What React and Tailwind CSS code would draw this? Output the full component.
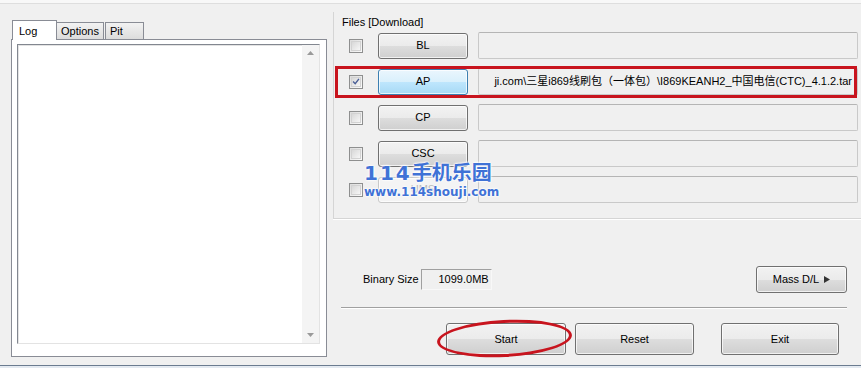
import React from "react";

const font = { fontFamily: '"Liberation Sans", "Noto Sans CJK SC", Arial, sans-serif' };

function Btn({ children, className = "", blue = false, disabled = false }) {
  const base = blue
    ? "border-[#3c7fb1] bg-[linear-gradient(#eaf6fd_0%,#d9f0fc_50%,#bee6fd_51%,#a7d9f5_100%)] text-black"
    : disabled
    ? "border-[#c8c8c8] bg-[#f4f4f4] text-[#b8b8b8]"
    : "border-[#707070] bg-[linear-gradient(#f2f2f2_0%,#ebebeb_50%,#dddddd_51%,#cfcfcf_100%)] text-black";
  return (
    <div
      className={`flex items-center justify-center rounded-[3px] border text-[11px] shadow-[inset_0_0_0_1px_rgba(255,255,255,0.7)] ${base} ${className}`}
    >
      {children}
    </div>
  );
}

function Check({ checked = false, className = "" }) {
  return (
    <div
      className={`flex h-[14px] w-[14px] items-center justify-center border border-[#8e8f8f] bg-[linear-gradient(135deg,#dcdcdc,#fbfbfb)] ${className}`}
    >
      <div className="flex h-[10px] w-[10px] items-center justify-center border border-[#d2d2d2] bg-[linear-gradient(135deg,#d8d8d8,#f6f6f6)]">
        {checked && (
          <svg width="9" height="9" viewBox="0 0 9 9">
            <path d="M1.2 4.6 L3.6 7 L7.8 1.6" fill="none" stroke="#4a5f97" strokeWidth="1.6" />
          </svg>
        )}
      </div>
    </div>
  );
}

function Field({ children }) {
  return (
    <div className="ml-[10px] flex h-[27px] w-[380px] items-center justify-end overflow-hidden whitespace-nowrap rounded-[2px] border border-[#c9c9c9] border-t-[#b5b5b5] bg-[#f0f0f0] pr-[5px] text-[11px] text-black">
      {children}
    </div>
  );
}

function Row({ label, checked, blue, disabled, value }) {
  return (
    <div className="flex h-[27px] items-center">
      <Check checked={checked} />
      <Btn blue={blue} disabled={disabled} className="ml-[15px] h-[26px] w-[90px]">
        {label}
      </Btn>
      <Field>{value}</Field>
    </div>
  );
}

export default function App() {
  return (
    <div style={font} className="relative flex h-[368px] w-[861px] flex-col overflow-hidden bg-[#f0f0f0] text-black">
      <div className="h-[4px] border-b border-[#dedede] bg-[#f8f8f8]" />
      <div className="flex flex-1">
        {/* Left: tabs */}
        <div className="w-[333px] pl-[11px] pt-[16px]">
          <div className="flex h-[19px] items-end pl-[1px]">
            <div className="relative z-10 -mb-[1px] flex h-[20px] w-[45px] items-start border border-b-0 border-[#898c95] bg-white pl-[6px] pt-[2px] text-[11px]">
              Log
            </div>
            <div className="flex h-[17px] w-[47px] items-center border border-l-0 border-b-0 border-[#898c95] bg-[linear-gradient(#f2f2f2,#dcdcdc)] pl-[4px] text-[11px]">
              Options
            </div>
            <div className="ml-[1px] flex h-[17px] w-[39px] items-center border border-b-0 border-[#898c95] bg-[linear-gradient(#f2f2f2,#dcdcdc)] pl-[4px] text-[11px]">
              Pit
            </div>
          </div>
          <div className="h-[318px] w-[316px] border border-[#898c95] bg-white pb-[12px] pl-[5px] pr-[6px] pt-[4px]">
            <div className="flex h-full border border-[#828790] border-b-[#e3e3e3] border-r-[#e3e3e3] bg-white">
              <div className="flex-1 border-l border-t border-[#e3e3e3]" />
              <div className="flex w-[17px] flex-col items-center justify-between bg-[#f4f4f4] py-[6px]">
                <svg width="7" height="4" viewBox="0 0 7 4">
                  <path d="M0 4 L3.5 0 L7 4 Z" fill="#9a9a9a" />
                </svg>
                <svg width="7" height="4" viewBox="0 0 7 4">
                  <path d="M0 0 L3.5 4 L7 0 Z" fill="#9a9a9a" />
                </svg>
              </div>
            </div>
          </div>
        </div>

        {/* Right */}
        <div className="flex flex-1 flex-col">
          <div className="mt-[8px] border-b border-l border-[#d5d5d5] pb-[15px] pl-[15px] pt-[3px] shadow-[0_1px_0_#ffffff]">
            <div className="-ml-[7px] h-[17px] text-[11px] leading-[14px]">Files [Download]</div>
            <div className="flex flex-col gap-[9px]">
              <Row label="BL" />
              <Row
                label="AP"
                checked
                blue
                value="ji.com\三星i869线刷包（一体包）\I869KEANH2_中国电信(CTC)_4.1.2.tar"
              />
              <Row label="CP" />
              <Row label="CSC" />
              <Row label="UMS" disabled />
            </div>
          </div>

          <div className="mt-[47px] flex h-[27px] items-center justify-between pl-[30px] pr-[14px]">
            <div className="flex items-center">
              <span className="text-[11px]">Binary Size</span>
              <div className="ml-[2px] flex h-[21px] w-[71px] items-center justify-end border border-[#a0a0a0] border-b-[#f8f8f8] border-r-[#f8f8f8] pr-[2px] text-[11px]">
                1099.0MB
              </div>
            </div>
            <Btn className="h-[27px] w-[91px]">
              Mass D/L
              <svg className="ml-[5px]" width="6" height="7" viewBox="0 0 6 7">
                <path d="M0 0 L6 3.5 L0 7 Z" fill="#333" />
              </svg>
            </Btn>
          </div>

          <div className="ml-[8px] mr-[14px] mt-[14px] h-[2px] border-b border-t border-[#a0a0a0] border-b-white" />

          <div className="mt-[14px] flex items-center pl-[113px]">
            <Btn className="h-[32px] w-[120px]">Start</Btn>
            <Btn className="ml-[9px] h-[32px] w-[119px]">Reset</Btn>
            <Btn className="ml-[27px] h-[32px] w-[118px]">Exit</Btn>
          </div>
        </div>
      </div>
      <div className="h-[3px] border-t border-[#6b7c90] bg-[#e4eaf1]" />

      {/* Red annotation box around AP row */}
      <div className="pointer-events-none absolute left-[335px] top-[66px] h-[32px] w-[522px] border-[3px] border-[#c8141e]" />
      {/* Red ellipse around Start */}
      <div className="pointer-events-none absolute left-[437px] top-[320px] h-[37px] w-[135px] -rotate-[3deg] rounded-[50%] border-[3px] border-[#c8141e]" />

      {/* Watermark */}
      <div
        className="pointer-events-none absolute left-[364px] top-[163px] flex flex-col font-bold leading-none text-[#3f72d6]"
        style={{ textShadow: "0 0 2px #fff, 0 0 2px #fff, 0 0 3px #fff" }}
      >
        <span className="text-[20px]" style={{ fontFamily: '"DejaVu Sans", "Noto Sans CJK SC", sans-serif' }}>
          <span className="tracking-[2px]">114</span>
          <span>手机乐园</span>
        </span>
        <span className="mt-[3px] text-[12px]" style={{ fontFamily: '"DejaVu Sans", sans-serif' }}>
          www.114shouji.com
        </span>
      </div>
    </div>
  );
}
